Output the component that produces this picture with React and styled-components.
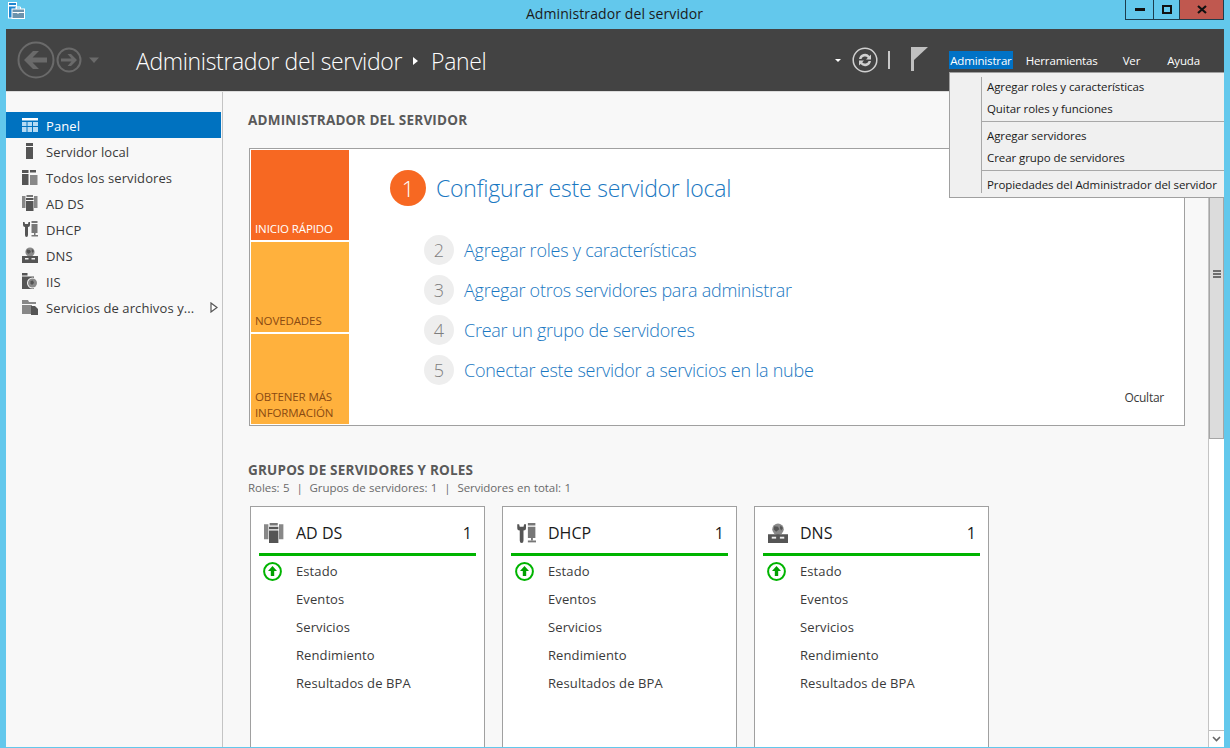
import React from 'react'
import styled, { createGlobalStyle } from 'styled-components'

const GlobalStyle = createGlobalStyle`
  html, body { margin: 0; padding: 0; height: 100%; overflow: hidden; }
  body { font-family: "Open Sans", "Noto Sans", sans-serif; background: #63c8ec; }
`

const Window = styled.div`
  position: relative;
  width: 1230px;
  height: 748px;
  display: flex;
  flex-direction: column;
  background: #63c8ec;
  overflow: hidden;
`

const TitleBar = styled.div`
  height: 29px;
  flex: none;
  display: flex;
  align-items: flex-start;
  padding: 2px 6px 0 8px;
  box-sizing: border-box;
`

const AppIcon = styled.svg`
  width: 17px;
  height: 17px;
  flex: none;
`

const TitleText = styled.div`
  flex: 1;
  text-align: center;
  font-size: 14px;
  line-height: 24px;
  color: #1b1b1b;
  letter-spacing: 0.1px;
  padding-left: 79px;
`

const WinButtons = styled.div`
  display: flex;
  height: 20px;
  margin-top: -2px;
  border: 1px solid #1d3d4d;
  border-top: none;
  box-sizing: border-box;
`

const WinButton = styled.div`
  width: ${p => p.$w}px;
  display: flex;
  align-items: center;
  justify-content: center;
  box-sizing: border-box;
  background: ${p => p.$close ? '#c0584f' : 'transparent'};
  border-left: ${p => p.$first ? 'none' : '1px solid #1d3d4d'};
`

const Frame = styled.div`
  flex: 1;
  min-height: 0;
  margin: 0 6px 1px;
  display: flex;
  flex-direction: column;
  background: #f8f8f8;
`

const Header = styled.div`
  height: 63px;
  flex: none;
  background: #434343;
  display: flex;
  align-items: center;
  padding-left: 11px;
  box-sizing: border-box;
  border-bottom: 1px solid #dcdcdc;
`

const NavGroup = styled.div`
  display: flex;
  align-items: center;
  width: 119px;
  flex: none;
`

const Breadcrumb = styled.div`
  display: flex;
  align-items: center;
  font-size: 23px;
  font-weight: 300;
  color: #fff;
  letter-spacing: -0.35px;
  flex: 1;
  padding-top: 2px;
`

const CrumbArrow = styled.span`
  width: 0;
  height: 0;
  border-left: 5px solid #fff;
  border-top: 4px solid transparent;
  border-bottom: 4px solid transparent;
  margin: 0 13px 0 11px;
`

const ToolGroup = styled.div`
  display: flex;
  align-items: center;
  flex: none;
  margin-right: 21px;
`

const SmallCaret = styled.span`
  width: 0;
  height: 0;
  border-top: 3.5px solid #fff;
  border-left: 3.5px solid transparent;
  border-right: 3.5px solid transparent;
  margin-right: 11px;
`

const ToolDivider = styled.span`
  width: 2px;
  height: 18px;
  background: #c8c8c8;
  margin: 0 21px 0 10px;
`

const MenuBar = styled.div`
  display: flex;
  align-items: center;
  flex: none;
  margin-right: 24px;
`

const MenuLabel = styled.div`
  font-size: 11.5px;
  line-height: 20px;
  height: 18px;
  color: #fff;
  letter-spacing: -0.15px;
  margin-right: ${p => p.$gap}px;
  background: ${p => p.$active ? '#0072c6' : 'transparent'};
  padding: ${p => p.$active ? '0 1px' : '0'};
  white-space: nowrap;
`

const Body = styled.div`
  flex: 1;
  min-height: 0;
  display: flex;
`

const Sidebar = styled.nav`
  width: 217px;
  flex: none;
  padding-top: 20px;
  box-sizing: border-box;
  border-right: 1px solid #c4c4c4;
  background: #f8f8f8;
`

const SideRow = styled.div`
  height: 26px;
  width: 215px;
  display: flex;
  align-items: center;
  padding-left: 16px;
  box-sizing: border-box;
  font-size: 13px;
  letter-spacing: 0.1px;
  color: ${p => p.$active ? '#fff' : '#3a3a3a'};
  background: ${p => p.$active ? '#0072c0' : 'transparent'};
`

const SideIcon = styled.svg`
  width: 16px;
  height: 16px;
  flex: none;
  margin-right: 8px;
  color: ${p => p.$active ? '#b5daf3' : '#555'};
`

const SideLabel = styled.span`
  flex: 1;
  white-space: nowrap;
  padding-top: 2px;
`

const Expander = styled.svg`
  width: 8px;
  height: 11px;
  flex: none;
  margin-right: 3px;
`

const Main = styled.main`
  flex: 1;
  min-width: 0;
  padding: 19px 0 0 25px;
  box-sizing: border-box;
  overflow: hidden;
`

const SectionTitle = styled.h2`
  margin: 0;
  font-size: 13.5px;
  line-height: 18px;
  font-weight: 700;
  color: #5a5a5a;
  letter-spacing: 0.2px;
`

const QuickBox = styled.section`
  width: 936px;
  height: 278px;
  margin: 19px 0 0 1px;
  border: 1px solid #a0a0a0;
  background: #fff;
  box-sizing: border-box;
  padding: 1px;
  display: flex;
  position: relative;
`

const TileColumn = styled.div`
  width: 98px;
  flex: none;
  display: flex;
  flex-direction: column;
  gap: 2px;
`

const Tile = styled.div`
  flex: 1;
  display: flex;
  align-items: flex-end;
  padding: 0 4px 3px;
  font-size: 11.5px;
  line-height: 16px;
  letter-spacing: -0.1px;
  color: ${p => p.$hot ? '#fff' : '#8a4a12'};
  background: ${p => p.$hot ? '#f76822' : '#ffb13d'};
`

const StepList = styled.div`
  flex: 1;
  padding: 19px 0 0 41px;
`

const FirstStep = styled.div`
  display: flex;
  align-items: center;
  height: 38px;
  margin-bottom: 23px;
`

const BigNumber = styled.span`
  width: 36px;
  height: 36px;
  border-radius: 50%;
  background: #f76822;
  color: #fff;
  font-size: 22px;
  font-weight: 300;
  display: flex;
  align-items: center;
  justify-content: center;
  margin-right: 10px;
`

const BigLink = styled.span`
  font-size: 23px;
  font-weight: 300;
  letter-spacing: -0.22px;
  color: #1a78c2;
`

const Step = styled.div`
  display: flex;
  align-items: center;
  height: 40px;
  padding-left: 34px;
`

const StepNumber = styled.span`
  width: 30px;
  height: 30px;
  border-radius: 50%;
  background: #eeeeee;
  color: #7d7d7d;
  font-size: 18px;
  font-weight: 300;
  display: flex;
  align-items: center;
  justify-content: center;
  margin-right: 10px;
`

const StepLink = styled.span`
  font-size: 18px;
  font-weight: 300;
  letter-spacing: -0.25px;
  color: #1a78c2;
`

const HideLink = styled.span`
  position: absolute;
  right: 20px;
  bottom: 19px;
  font-size: 12px;
  letter-spacing: -0.25px;
  color: #3a3a3a;
`

const GroupsTitle = styled(SectionTitle)`
  margin-top: 35px;
`

const GroupsMeta = styled.div`
  font-size: 11.5px;
  line-height: 16px;
  color: #6a6a6a;
  letter-spacing: -0.05px;
  word-spacing: 0.5px;
  margin-top: 1px;
`

const CardRow = styled.div`
  display: flex;
  gap: 17px;
  margin: 10px 0 0 2px;
`

const Card = styled.article`
  width: 235px;
  height: 260px;
  flex: none;
  background: #fff;
  border: 1px solid #a0a0a0;
  box-sizing: border-box;
  padding: 0 8px;
`

const CardHead = styled.div`
  height: 41px;
  display: flex;
  align-items: center;
  border-bottom: 3px solid #00b400;
  padding: 5px 4px 0 5px;
  box-sizing: content-box;
  margin-bottom: 1px;
`

const CardIcon = styled.svg`
  width: 20px;
  height: 20px;
  flex: none;
  margin-right: 12px;
`

const CardName = styled.span`
  flex: 1;
  font-size: 16px;
  color: #1a1a1a;
`

const CardCount = styled.span`
  font-size: 16px;
  color: #1a1a1a;
`

const CardLine = styled.div`
  height: 28px;
  display: flex;
  align-items: center;
  padding-left: 4px;
  font-size: 13px;
  letter-spacing: 0.1px;
  color: #3a3a3a;
`

const LineIconSlot = styled.span`
  width: 33px;
  flex: none;
  display: flex;
  align-items: center;
`

const ScrollBar = styled.div`
  width: 16px;
  flex: none;
  display: flex;
  flex-direction: column;
  background: #fff;
  border-left: 1px solid #c4c4c4;
  box-sizing: border-box;
`

const ScrollArrow = styled.div`
  height: 16px;
  flex: none;
  display: flex;
  align-items: center;
  justify-content: center;
  border-top: 1px solid #bcbcbc;
  margin-top: ${p => p.$bottom ? 'auto' : '0'};
`

const ScrollThumb = styled.div`
  height: 330px;
  flex: none;
  background: #dcdcdc;
  border: 1px solid #a6a6a6;
  box-sizing: border-box;
  display: flex;
  align-items: center;
  justify-content: center;
`

const Grip = styled.span`
  width: 8px;
  height: 8px;
  background: repeating-linear-gradient(#6e6e6e 0 2px, #dcdcdc 2px 3px);
`

const DropMenu = styled.div`
  position: absolute;
  left: 949px;
  top: 72px;
  width: 275px;
  height: 126px;
  box-sizing: border-box;
  border: 1px solid #a0a0a0;
  border-right: none;
  background: #f0f0f0;
  padding: 4px 0 4px 31px;
`

const MenuBody = styled.div`
  height: 100%;
  border-left: 1px solid #a8a8a8;
  display: flex;
  flex-direction: column;
`

const MenuEntry = styled.div`
  height: 22px;
  line-height: 20px;
  padding-left: 5px;
  font-size: 11.5px;
  letter-spacing: -0.08px;
  color: #1a1a1a;
  white-space: nowrap;
  flex: none;
`

const MenuRule = styled.div`
  height: 1px;
  flex: none;
  background: #a8a8a8;
  margin: 0 0 4px;
`

const icons = {
  panel: (
    <>
      <rect x="0" y="1" width="16" height="2.5" fill="#fff" />
      <rect x="0" y="5" width="4.5" height="4" fill="currentColor" />
      <rect x="5.5" y="5" width="4.5" height="4" fill="currentColor" />
      <rect x="11" y="5" width="5" height="4" fill="currentColor" />
      <rect x="0" y="10" width="4.5" height="5" fill="currentColor" />
      <rect x="5.5" y="10" width="4.5" height="5" fill="currentColor" />
      <rect x="11" y="10" width="5" height="5" fill="currentColor" />
    </>
  ),
  local: (
    <>
      <rect x="4" y="0" width="7" height="3" fill="#555" />
      <rect x="4" y="4" width="7" height="12" fill="#555" />
    </>
  ),
  all: (
    <>
      <rect x="0" y="1" width="6.5" height="3" fill="#555" />
      <rect x="0" y="5" width="6.5" height="11" fill="#555" />
      <rect x="8" y="1" width="6" height="2.5" fill="#555" />
      <rect x="8" y="6" width="7.5" height="10" fill="#888" />
    </>
  ),
  adds: (
    <>
      <rect x="0" y="1" width="3.5" height="12" fill="#888" />
      <rect x="12" y="1" width="3.5" height="12" fill="#888" />
      <rect x="4.5" y="0" width="6.5" height="2" fill="#777" />
      <rect x="4" y="3" width="7.5" height="2" fill="#555" />
      <rect x="4" y="6" width="7.5" height="10" fill="#555" />
    </>
  ),
  dhcp: (
    <>
      <path d="M1 1 L1 4 Q1 6 3 6 L3 14 Q3 16 4.5 16 Q6 16 6 14 L6 6 Q8 6 8 4 L8 1 L6.5 1 L6 3 L3 3 L2.5 1 Z" fill="#555" />
      <rect x="9.5" y="0" width="6" height="2" fill="#777" />
      <rect x="9.5" y="3" width="6" height="9" fill="#777" />
      <rect x="12" y="12" width="1.5" height="2" fill="#777" />
      <rect x="9.5" y="14" width="6.5" height="1.5" fill="#777" />
    </>
  ),
  dns: (
    <>
      <circle cx="8" cy="5" r="4.6" fill="#8a8a8a" />
      <path d="M5 2.5 L8 3 L9 5 L6.5 7 L4.5 5 Z M10 2 L12 4 L10.5 6 L9.5 4 Z" fill="#555" />
      <rect x="0" y="9" width="16" height="7" fill="#555" />
      <rect x="3" y="11" width="3.5" height="1.5" fill="#eee" />
      <rect x="9.5" y="11" width="3.5" height="1.5" fill="#eee" />
    </>
  ),
  iis: (
    <>
      <rect x="0" y="0" width="5.5" height="2.5" fill="#555" />
      <rect x="0" y="3.5" width="12" height="12.5" fill="#555" />
      <circle cx="10.5" cy="10" r="5.5" fill="#f8f8f8" />
      <circle cx="10.5" cy="10" r="4.5" fill="#8a8a8a" />
      <path d="M8.5 8 L11 7.5 L12 10 L10 12 L8.5 10.5 Z" fill="#555" />
    </>
  ),
  files: (
    <>
      <path d="M0 1 H6 L7 3 H14 V5 H0 Z" fill="#888" />
      <rect x="0" y="6" width="10" height="9" fill="#888" />
      <path d="M9 7 H13 L16 10 V16 H9 Z" fill="#555" />
    </>
  )
}

const BackIcon = () => (
  <svg width="38" height="38" viewBox="0 0 38 38" style={{ flex: 'none' }}>
    <circle cx="19" cy="19" r="17.5" fill="none" stroke="#6a6a6a" strokeWidth="2" />
    <path d="M7 19 L16 10 H22 L15.5 16.5 H30 V21.5 H15.5 L22 28 H16 Z" fill="#6a6a6a" />
  </svg>
)

const ForwardIcon = () => (
  <svg width="26" height="26" viewBox="0 0 26 26" style={{ flex: 'none', marginLeft: 1 }}>
    <circle cx="13" cy="13" r="11.5" fill="none" stroke="#6a6a6a" strokeWidth="2" />
    <path d="M21 13 L15 7 H11.5 L15.5 11.5 H5 V14.5 H15.5 L11.5 19 H15 Z" fill="#6a6a6a" />
  </svg>
)

const NavCaret = () => (
  <svg width="12" height="7" viewBox="0 0 12 7" style={{ flex: 'none', marginLeft: 6 }}>
    <path d="M1 0.5 H11 L6 6 Z" fill="#6a6a6a" />
  </svg>
)

const RefreshIcon = () => (
  <svg width="26" height="26" viewBox="0 0 26 26" style={{ flex: 'none' }}>
    <circle cx="13" cy="13" r="11.8" fill="none" stroke="#d0d0d0" strokeWidth="1.5" />
    <path d="M7 12 A6 6 0 0 1 17.5 9 L19 7.5 V12.5 H14 L15.8 10.7 A3.8 3.8 0 0 0 9.4 12 Z" fill="#d0d0d0" />
    <path d="M19 14 A6 6 0 0 1 8.5 17 L7 18.5 V13.5 H12 L10.2 15.3 A3.8 3.8 0 0 0 16.6 14 Z" fill="#d0d0d0" />
  </svg>
)

const FlagIcon = () => (
  <svg width="17" height="24" viewBox="0 0 17 24" style={{ flex: 'none', marginTop: -3 }}>
    <rect x="0" y="0" width="3" height="24" fill="#c0c0c0" />
    <path d="M3 0 H17 L3 13 Z" fill="#c0c0c0" />
  </svg>
)

const UpStatus = () => (
  <svg width="19" height="19" viewBox="0 0 19 19">
    <circle cx="9.5" cy="9.5" r="8.4" fill="#fff" stroke="#00b400" strokeWidth="2" />
    <path d="M9.5 4 L14 9 H11.2 V14 H7.8 V9 H5 Z" fill="#00a000" />
  </svg>
)

const sideItems = [
  { key: 'panel', label: 'Panel', active: true },
  { key: 'local', label: 'Servidor local' },
  { key: 'all', label: 'Todos los servidores' },
  { key: 'adds', label: 'AD DS' },
  { key: 'dhcp', label: 'DHCP' },
  { key: 'dns', label: 'DNS' },
  { key: 'iis', label: 'IIS' },
  { key: 'files', label: 'Servicios de archivos y...', more: true }
]

const steps = [
  ['2', 'Agregar roles y características'],
  ['3', 'Agregar otros servidores para administrar'],
  ['4', 'Crear un grupo de servidores'],
  ['5', 'Conectar este servidor a servicios en la nube']
]

const cards = [
  { key: 'adds', name: 'AD DS' },
  { key: 'dhcp', name: 'DHCP' },
  { key: 'dns', name: 'DNS' }
]

const cardLines = ['Estado', 'Eventos', 'Servicios', 'Rendimiento', 'Resultados de BPA']

export default function App() {
  return (
    <Window>
      <GlobalStyle />
      <TitleBar>
        <AppIcon viewBox="0 0 17 17">
          <rect x="0.5" y="0.5" width="8" height="15.5" fill="#1f86d0" stroke="#fff" />
          <rect x="1" y="3" width="7" height="1.5" fill="#fff" />
          <rect x="4" y="7" width="12.5" height="9.5" fill="#6c93ad" stroke="#fff" />
          <path d="M8 7 V5 H12.5 V7 M4.5 10.5 H16 M10 10 V12" fill="none" stroke="#fff" />
        </AppIcon>
        <TitleText>Administrador del servidor</TitleText>
        <WinButtons>
          <WinButton $w={27} $first>
            <svg width="10" height="3"><rect width="10" height="3" fill="#111" /></svg>
          </WinButton>
          <WinButton $w={26}>
            <svg width="10" height="9"><rect x="1" y="1" width="8" height="7" fill="none" stroke="#111" strokeWidth="2" /></svg>
          </WinButton>
          <WinButton $w={44} $close>
            <svg width="10" height="9"><path d="M1 1 L9 8 M9 1 L1 8" stroke="#111" strokeWidth="2.2" /></svg>
          </WinButton>
        </WinButtons>
      </TitleBar>
      <Frame>
        <Header>
          <NavGroup>
            <BackIcon />
            <ForwardIcon />
            <NavCaret />
          </NavGroup>
          <Breadcrumb>
            Administrador del servidor
            <CrumbArrow />
            Panel
          </Breadcrumb>
          <ToolGroup>
            <SmallCaret />
            <RefreshIcon />
            <ToolDivider />
            <FlagIcon />
          </ToolGroup>
          <MenuBar>
            <MenuLabel $active $gap={13}>Administrar</MenuLabel>
            <MenuLabel $gap={25}>Herramientas</MenuLabel>
            <MenuLabel $gap={27}>Ver</MenuLabel>
            <MenuLabel $gap={0}>Ayuda</MenuLabel>
          </MenuBar>
        </Header>
        <Body>
          <Sidebar>
            {sideItems.map(item => (
              <SideRow key={item.key} $active={item.active}>
                <SideIcon viewBox="0 0 16 16" $active={item.active}>
                  {icons[item.key]}
                </SideIcon>
                <SideLabel>{item.label}</SideLabel>
                {item.more && (
                  <Expander viewBox="0 0 8 11">
                    <path d="M1 1 L7 5.5 L1 10 Z" fill="#fff" stroke="#555" strokeWidth="1.2" />
                  </Expander>
                )}
              </SideRow>
            ))}
          </Sidebar>
          <Main>
            <SectionTitle>ADMINISTRADOR DEL SERVIDOR</SectionTitle>
            <QuickBox>
              <TileColumn>
                <Tile $hot>INICIO RÁPIDO</Tile>
                <Tile>NOVEDADES</Tile>
                <Tile>OBTENER MÁS<br />INFORMACIÓN</Tile>
              </TileColumn>
              <StepList>
                <FirstStep>
                  <BigNumber>1</BigNumber>
                  <BigLink>Configurar este servidor local</BigLink>
                </FirstStep>
                {steps.map(([n, text]) => (
                  <Step key={n}>
                    <StepNumber>{n}</StepNumber>
                    <StepLink>{text}</StepLink>
                  </Step>
                ))}
              </StepList>
              <HideLink>Ocultar</HideLink>
            </QuickBox>
            <GroupsTitle>GRUPOS DE SERVIDORES Y ROLES</GroupsTitle>
            <GroupsMeta>Roles: 5 &nbsp;|&nbsp; Grupos de servidores: 1 &nbsp;|&nbsp; Servidores en total: 1</GroupsMeta>
            <CardRow>
              {cards.map(card => (
                <Card key={card.key}>
                  <CardHead>
                    <CardIcon viewBox="0 0 16 16">{icons[card.key]}</CardIcon>
                    <CardName>{card.name}</CardName>
                    <CardCount>1</CardCount>
                  </CardHead>
                  {cardLines.map((line, i) => (
                    <CardLine key={line}>
                      <LineIconSlot>{i === 0 && <UpStatus />}</LineIconSlot>
                      {line}
                    </CardLine>
                  ))}
                </Card>
              ))}
            </CardRow>
          </Main>
          <ScrollBar>
            <ScrollArrow />
            <ScrollThumb><Grip /></ScrollThumb>
            <ScrollArrow $bottom>
              <svg width="9" height="6"><path d="M1 1 L4.5 4.5 L8 1" fill="none" stroke="#666" strokeWidth="1.6" /></svg>
            </ScrollArrow>
          </ScrollBar>
        </Body>
      </Frame>
      <DropMenu>
        <MenuBody>
          <MenuEntry>Agregar roles y características</MenuEntry>
          <MenuEntry>Quitar roles y funciones</MenuEntry>
          <MenuRule />
          <MenuEntry>Agregar servidores</MenuEntry>
          <MenuEntry>Crear grupo de servidores</MenuEntry>
          <MenuRule />
          <MenuEntry>Propiedades del Administrador del servidor</MenuEntry>
        </MenuBody>
      </DropMenu>
    </Window>
  )
}
